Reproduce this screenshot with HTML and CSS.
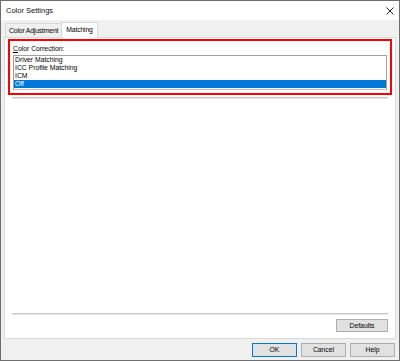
FILE: index.html
```html
<!DOCTYPE html>
<html>

<head>
    <title>Color Settings</title>
    <link rel="stylesheet" href="styles.css">
</head>

<body>
    <div class="window">
        <div class="titleBar">
            <span class="titleText">Color Settings</span>
            <span class="closeButton">
                <svg width="8" height="8" viewBox="0 0 8 8">
                    <path d="M0.5 0.5 L7.5 7.5 M7.5 0.5 L0.5 7.5" stroke="#222" stroke-width="1" fill="none" />
                </svg>
            </span>
        </div>

        <div class="dialogBody">
            <div class="tabStrip">
                <div class="tab">Color Adjustment</div>
                <div class="tab selected">Matching</div>
            </div>

            <div class="tabPanel">
                <div class="highlightBox">
                    <div class="fieldLabel"><u>C</u>olor Correction:</div>
                    <div class="listBox">
                        <div class="listItem">Driver Matching</div>
                        <div class="listItem">ICC Profile Matching</div>
                        <div class="listItem">ICM</div>
                        <div class="listItem active">Off</div>
                    </div>
                </div>
                <div class="separator"></div>
                <div class="spacer"></div>
                <div class="separator"></div>
                <div class="panelButtons">
                    <button class="dialogButton defaults">Defaults</button>
                </div>
            </div>

            <div class="footer">
                <button class="dialogButton primary">OK</button>
                <button class="dialogButton">Cancel</button>
                <button class="dialogButton">Help</button>
            </div>
        </div>
    </div>
</body>

</html>
```

FILE: styles.css
```css
body {
    margin: 0;
    font-family: "Liberation Sans", Arial, sans-serif;
    font-size: 6.8px;
    color: #000000;
}

.window {
    width: 400px;
    height: 361px;
    box-sizing: border-box;
    border: 1px solid #6e6e6e;
    background-color: #f0f0f0;
    display: flex;
    flex-direction: column;
}

.titleBar {
    height: 19px;
    background-color: #ffffff;
    display: flex;
    align-items: center;
    justify-content: space-between;
    padding: 0 5px 0 5px;
}

.titleText {
    font-size: 7.5px;
    color: #111111;
}

.closeButton {
    display: flex;
}

.dialogBody {
    flex: 1;
    display: flex;
    flex-direction: column;
    padding: 2px 3px 0 3px;
}

.tabStrip {
    display: flex;
    align-items: flex-end;
    padding-left: 1px;
    height: 15px;
}

.tab {
    height: 13px;
    line-height: 13px;
    padding: 0 3px;
    border: 1px solid #d9d9d9;
    border-bottom: none;
    margin-right: -1px;
    background-color: #f0f0f0;
    letter-spacing: -0.15px;
}

.tab.selected {
    height: 15px;
    line-height: 14px;
    background-color: #ffffff;
    position: relative;
    margin-bottom: -1px;
    padding: 0 4px;
}

.tabPanel {
    flex: 1;
    background-color: #ffffff;
    border: 1px solid #d9d9d9;
    display: flex;
    flex-direction: column;
    padding: 1px 3px 6px 3px;
}

.highlightBox {
    border: 2px solid #ff0000;
    padding: 3px 3px 3px 3px;
}

.fieldLabel {
    line-height: 9px;
    margin-bottom: 2px;
}

.listBox {
    border: 1px solid #a0a0a0;
    border-bottom-color: #b9c0cc;
    padding: 0 0 1px 0;
}

.listItem {
    height: 8px;
    line-height: 8px;
    padding-left: 1px;
}

.listItem.active {
    background-color: #0078d7;
    color: #ffffff;
}

.separator {
    height: 1px;
    background-color: #c8c8c8;
    border-bottom: 1px solid #e6e6e6;
    margin: 2px 4px 0 4px;
}

.spacer {
    flex: 1;
}

.panelButtons {
    display: flex;
    justify-content: flex-end;
    padding: 4px 4px 0 0;
}

.dialogButton {
    font-family: "Liberation Sans", Arial, sans-serif;
    font-size: 6.8px;
    height: 14px;
    width: 45px;
    padding: 0;
    background-color: #e1e1e1;
    border: 1px solid #adadad;
    color: #000000;
}

.dialogButton.defaults {
    width: 52px;
    height: 13px;
}

.dialogButton.primary {
    border-color: #0078d7;
}

.footer {
    height: 21px;
    display: flex;
    justify-content: flex-end;
    align-items: center;
    gap: 4px;
    padding-right: 1px;
}
```
